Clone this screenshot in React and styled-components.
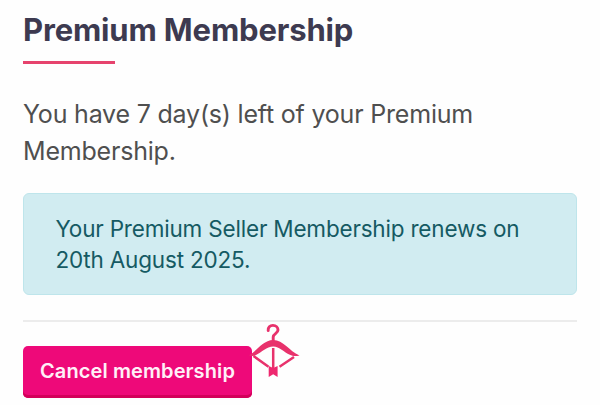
import React from "react"
import styled, { createGlobalStyle } from "styled-components"

const GlobalStyle = createGlobalStyle`
  body {
    margin: 0;
    background-color: #fefefe;
    font-family: Inter, "Liberation Sans", sans-serif;
  }
`

const Section = styled.section`
  display: flex;
  flex-direction: column;
  box-sizing: border-box;
  height: 405px;
  padding: 10px 23px 0;
  overflow: hidden;
`

const Title = styled.h1`
  margin: 0;
  color: #3d3a50;
  font-size: 31px;
  font-weight: 700;
  letter-spacing: -0.15px;
  line-height: 40px;
  white-space: nowrap;

  &::after {
    content: "";
    display: block;
    width: 92px;
    height: 3px;
    margin-top: 11px;
    background-color: #e6436d;
  }
`

const Remaining = styled.p`
  margin: 32px 0 0;
  color: #4f4f4f;
  font-size: 25px;
  letter-spacing: -0.2px;
  line-height: 37px;
`

const Notice = styled.div`
  box-sizing: border-box;
  height: 102px;
  margin-top: 23px;
  padding: 19px 31.5px;
  border: 1px solid #bee5eb;
  border-radius: 6px;
  background-color: #d1ecf1;
  color: #155a63;
  font-size: 22.5px;
  letter-spacing: -0.19px;
  line-height: 31px;
`

const Divider = styled.hr`
  width: 100%;
  height: 2px;
  margin: 25px 0 0;
  border: 0;
  background-color: #ececec;
`

const Actions = styled.div`
  position: relative;
  display: flex;
  margin-top: 24px;
`

const CancelButton = styled.button`
  box-sizing: border-box;
  width: 229px;
  height: 52px;
  padding: 0 0 2px;
  border: 0;
  border-radius: 5px;
  background-color: #ee0979;
  box-shadow: inset 0 -3px 0 #d3005a;
  color: #fff0f8;
  font-family: inherit;
  font-size: 20px;
  font-weight: 600;
  letter-spacing: 0.1px;
  white-space: nowrap;
`

const HangerIcon = styled.svg`
  position: absolute;
  top: -24px;
  left: 225px;
  width: 54px;
  height: 58px;
`

const App = () => (
  <>
    <GlobalStyle />
    <Section>
      <Title>Premium Membership</Title>
      <Remaining>
        You have 7 day(s) left of your Premium
        <br />
        Membership.
      </Remaining>
      <Notice>
        Your Premium Seller Membership renews on
        <br />
        20th August 2025.
      </Notice>
      <Divider />
      <Actions>
        <CancelButton type="button">Cancel membership</CancelButton>
        <HangerIcon viewBox="0 0 54 58" fill="none" aria-hidden="true">
          <path
            d="M20.2 8.6C19.8 5.4 22 3.4 24.9 3.4C28 3.4 30 5.4 30 8.1C30 11.6 25.2 11.6 25.2 15V20"
            stroke="#e8326c"
            strokeWidth="2.9"
            strokeLinecap="round"
          />
          <path
            d="M1 33.2C9 29 15 18 25.2 18C35.4 18 41 29 51.5 33.4C47.5 34.6 44.8 34.2 41.8 32.8C36 30 31.5 24.4 25.2 24.4C18.5 24.4 14 30 8 33C5.5 34.3 3.5 34.2 1 33.2Z"
            fill="#e8326c"
          />
          <path
            d="M5.5 34L20.5 44.8M46 35L31.5 44.8M25.2 26V47"
            stroke="#e8326c"
            strokeWidth="2.5"
          />
          <path
            d="M20.7 44L25.2 46L29.6 44V55L25.2 52.2L20.7 55Z"
            fill="#ee286f"
          />
        </HangerIcon>
      </Actions>
    </Section>
  </>
)

export default App
